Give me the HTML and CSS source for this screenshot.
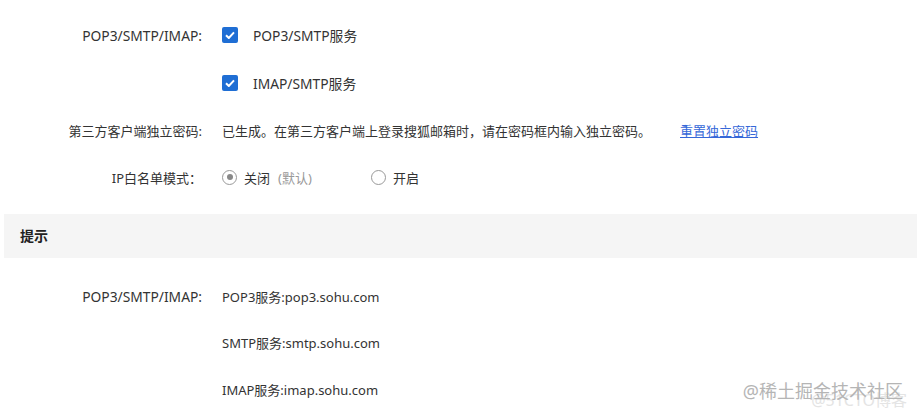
FILE: index.html
```html
<!DOCTYPE html>
<html lang="zh-CN">
<head>
    <meta charset="UTF-8">
    <title>POP3/SMTP/IMAP 设置</title>
    <link rel="stylesheet" href="styles.css">
</head>
<body>
    <div class="page">
        <div class="form">
            <div class="row">
                <div class="label en">POP3/SMTP/IMAP:</div>
                <div class="value">
                    <span class="check">
                        <svg width="10" height="8" viewBox="0 0 10 8"><path d="M1 4.2 L3.8 7 L9 1.4" fill="none" stroke="#fff" stroke-width="2"/></svg>
                    </span>
                    <span class="check-text en">POP3/SMTP服务</span>
                </div>
            </div>
            <div class="row">
                <div class="label"></div>
                <div class="value">
                    <span class="check">
                        <svg width="10" height="8" viewBox="0 0 10 8"><path d="M1 4.2 L3.8 7 L9 1.4" fill="none" stroke="#fff" stroke-width="2"/></svg>
                    </span>
                    <span class="check-text en">IMAP/SMTP服务</span>
                </div>
            </div>
            <div class="row">
                <div class="label">第三方客户端独立密码:</div>
                <div class="value">
                    <span>已生成。在第三方客户端上登录搜狐邮箱时，请在密码框内输入独立密码。</span>
                    <a class="link" href="#">重置独立密码</a>
                </div>
            </div>
            <div class="row">
                <div class="label">IP白名单模式：</div>
                <div class="value">
                    <span class="option first">
                        <span class="radio on"></span>
                        <span>关闭</span>
                        <span class="muted">(默认)</span>
                    </span>
                    <span class="option">
                        <span class="radio"></span>
                        <span>开启</span>
                    </span>
                </div>
            </div>
        </div>

        <div class="bar">提示</div>

        <div class="form tips">
            <div class="row">
                <div class="label en">POP3/SMTP/IMAP:</div>
                <div class="value">POP3服务:pop3.sohu.com</div>
            </div>
            <div class="row">
                <div class="label"></div>
                <div class="value">SMTP服务:smtp.sohu.com</div>
            </div>
            <div class="row">
                <div class="label"></div>
                <div class="value">IMAP服务:imap.sohu.com</div>
            </div>
        </div>
    </div>

    <div class="watermark">
        <span class="wm-back">@51CTO博客</span>
        <span class="wm-front">@稀土掘金技术社区</span>
    </div>
</body>
</html>
```

FILE: styles.css
```css
body {
    margin: 0;
    font-family: 'Noto Sans', 'Noto Sans CJK SC', sans-serif;
    font-size: 13px;
    color: #333;
    background: #fff;
    overflow: hidden;
}
.page {
    margin-left: 4px;
}
.form {
    padding-top: 11.8px;
    padding-bottom: 12.9px;
}
.row {
    display: flex;
    align-items: center;
    height: 47.33px;
}
.label {
    width: 198px;
    text-align: right;
    flex-shrink: 0;
}
.value {
    display: flex;
    align-items: center;
    margin-left: 20px;
    white-space: nowrap;
}
.en {
    font-size: 13.8px;
}
.check {
    width: 16px;
    height: 16px;
    border-radius: 2px;
    background: #1f6ed4;
    display: inline-flex;
    align-items: center;
    justify-content: center;
}
.check-text {
    margin-left: 15px;
}
.link {
    margin-left: 29px;
    color: #3567d8;
    text-decoration: underline;
}
.option {
    display: inline-flex;
    align-items: center;
}
.option.first {
    width: 149px;
}
.radio {
    width: 13px;
    height: 13px;
    border: 1px solid #999;
    border-radius: 50%;
    margin-right: 7px;
    position: relative;
    box-sizing: content-box;
}
.radio.on::after {
    content: "";
    position: absolute;
    left: 3.5px;
    top: 3.5px;
    width: 6px;
    height: 6px;
    border-radius: 50%;
    background: #888;
}
.muted {
    color: #999;
    margin-left: 8px;
}
.bar {
    height: 44px;
    line-height: 44px;
    background: #f5f5f5;
    padding-left: 16px;
    font-size: 14px;
    font-weight: bold;
    color: #222;
}
.tips {
    padding-top: 15px;
}
.tips .row {
    height: 46.5px;
}
.watermark {
    position: absolute;
    right: 14px;
    bottom: 16px;
    font-size: 18px;
}
.wm-front {
    color: #b5b5b5;
    position: relative;
}
.wm-back {
    position: absolute;
    right: -4px;
    top: 10px;
    color: #e4e4e4;
    font-size: 16px;
}
```
